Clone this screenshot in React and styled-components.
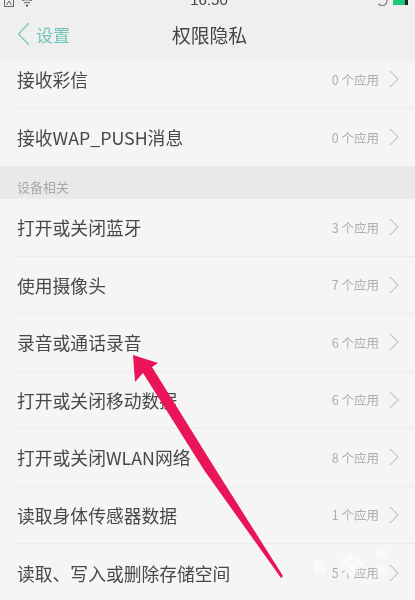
import React from 'react';
import styled, { createGlobalStyle } from 'styled-components';

const rowsTop = [
    { name: '接收彩信', count: 0 },
    { name: '接收WAP_PUSH消息', count: 0 },
];

const rowsDevice = [
    { name: '打开或关闭蓝牙', count: 3 },
    { name: '使用摄像头', count: 7 },
    { name: '录音或通话录音', count: 6 },
    { name: '打开或关闭移动数据', count: 6 },
    { name: '打开或关闭WLAN网络', count: 8 },
    { name: '读取身体传感器数据', count: 1 },
    { name: '读取、写入或删除存储空间', count: 5 },
];

const Chevron = () => (
    <ChevronIcon viewBox="0 0 11 20">
        <path d="M1 1l9 9-9 9" fill="none" stroke="#c4c4c4" strokeWidth="1.2" />
    </ChevronIcon>
);

const Row = ({ name, count, last }) => (
    <RowItem $last={last}>
        <RowName>{name}</RowName>
        <RowCount>{count} 个应用</RowCount>
        <Chevron />
    </RowItem>
);

const App = () => (
    <Page>
        <GlobalStyle />
        <StatusBar>
            <StatusLeft>
                <svg width="10" height="7" viewBox="0 0 10 7">
                    <rect x="0.5" y="-3" width="9" height="9.500" fill="none" stroke="#666" />
                    <path d="M2.500 5l2.500-4 2.500 4" fill="none" stroke="#666" />
                </svg>
                <svg width="12" height="7" viewBox="0 0 12 7">
                    <path d="M1 0.500c3-1 7-1 10 0M3 3c2-1 4-1 6 0" fill="none" stroke="#666" strokeWidth="1.200" />
                    <circle cx="6" cy="5.500" r="1.200" fill="#666" />
                </svg>
            </StatusLeft>
            <StatusTime>16:50</StatusTime>
            <StatusRight>
                <svg width="12" height="7" viewBox="0 0 12 7">
                    <path d="M10 0c0 3.500-2 5.500-5 5.500-1.500 0-2.500-.5-3.500-1.500" fill="none" stroke="#777" strokeWidth="1.100" />
                </svg>
                <Battery>
                    <BatteryCap />
                </Battery>
            </StatusRight>
        </StatusBar>
        <Header>
            <BackLink>
                <svg width="13" height="24" viewBox="0 0 13 24">
                    <path d="M12 1L1.500 12 12 23" fill="none" stroke="#7cc8bf" strokeWidth="1.300" />
                </svg>
                <span>设置</span>
            </BackLink>
            <Title>权限隐私</Title>
        </Header>
        <ScrollArea>
            <RowGroup>
                {rowsTop.map((r, i) => (
                    <Row key={r.name} name={r.name} count={r.count} last={i === rowsTop.length - 1} />
                ))}
            </RowGroup>
            <SectionLabel>设备相关</SectionLabel>
            <RowGroup>
                {rowsDevice.map((r, i) => (
                    <Row key={r.name} name={r.name} count={r.count} last={i === rowsDevice.length - 1} />
                ))}
            </RowGroup>
        </ScrollArea>
        <Arrow viewBox="0 0 415 600">
            <path d="M133 355L158 363 152 367 216 470 283 576 281 578 204 470 143 373 135 382Z" fill="#ea1558" />
        </Arrow>
        <Watermark>
            <WatermarkBrand>
                B
                <svg width="26" height="24" viewBox="0 0 26 24">
                    <ellipse cx="7" cy="6" rx="2.500" ry="3.500" fill="#fff" />
                    <ellipse cx="13" cy="3.500" rx="2.500" ry="3.500" fill="#fff" />
                    <ellipse cx="19" cy="6" rx="2.500" ry="3.500" fill="#fff" />
                    <ellipse cx="3" cy="12" rx="2" ry="3" fill="#fff" />
                    <ellipse cx="23" cy="12" rx="2" ry="3" fill="#fff" />
                    <ellipse cx="13" cy="15" rx="7" ry="6" fill="#fff" />
                </svg>
                <span>经验</span>
            </WatermarkBrand>
        </Watermark>
    </Page>
);

const GlobalStyle = createGlobalStyle`
    html, body {
        margin: 0;
        padding: 0;
        background: #f5f5f5;
    }
`

const Page = styled.div`
    position: relative;
    width: 415px;
    height: 600px;
    overflow: hidden;
    background: #f5f5f5;
    font-family: "Noto Sans CJK SC", "Liberation Sans", sans-serif;
    filter: blur(0.6px);
`

const StatusBar = styled.div`
    display: flex;
    align-items: flex-start;
    justify-content: space-between;
    height: 7px;
    padding-left: 4px;
    background: #efefef;
    overflow: hidden;
`

const StatusLeft = styled.div`
    display: flex;
    align-items: flex-start;
    gap: 7px;
    width: 60px;
`

const StatusTime = styled.div`
    font-family: "Liberation Sans", sans-serif;
    font-size: 15px;
    line-height: 15px;
    height: 15px;
    flex-shrink: 0;
    color: #444;
    margin: -8px 0 0 3px;
`

const StatusRight = styled.div`
    display: flex;
    align-items: flex-start;
    justify-content: flex-end;
    gap: 4px;
    width: 64px;
`

const Battery = styled.div`
    display: flex;
    justify-content: flex-end;
    width: 22px;
    height: 5px;
    background: #1ec97e;
`

const BatteryCap = styled.div`
    width: 10px;
    height: 5px;
    background: #f0f0f0;
    border-left: 3px solid #222;
    box-sizing: border-box;
`

const Header = styled.div`
    position: relative;
    display: flex;
    align-items: center;
    justify-content: center;
    height: 54px;
    padding-left: 4px;
    background: #efefef;
`

const BackLink = styled.div`
    position: absolute;
    left: 17px;
    top: 0;
    bottom: 0;
    display: flex;
    align-items: center;
    gap: 6px;
    color: #74c4ba;
    font-size: 17px;
`

const Title = styled.div`
    font-size: 18.800px;
    color: #444;
`

const ScrollArea = styled.div`
    height: 539px;
    overflow: hidden;
`

const RowGroup = styled.div`
    display: flex;
    flex-direction: column;

    &:first-child {
        margin-top: -10px;
    }
`

const RowItem = styled.div`
    display: flex;
    align-items: center;
    height: 57.500px;
    margin-left: 17px;
    padding-right: 16px;
    box-sizing: border-box;
    border-bottom: ${(p) => (p.$last ? 'none' : '1px solid #ebebeb')};
`

const RowName = styled.div`
    flex: 1;
    font-size: 17.800px;
    color: #484848;
`

const RowCount = styled.div`
    font-size: 12.500px;
    color: #aeaeae;
    margin-right: 10px;
`

const ChevronIcon = styled.svg`
    width: 10px;
    height: 18px;
`

const SectionLabel = styled.div`
    display: flex;
    align-items: center;
    height: 33px;
    padding: 8px 0 0 17px;
    box-sizing: border-box;
    background: #e9e9e9;
    font-size: 13px;
    color: #a8a8a8;
`

const Arrow = styled.svg`
    position: absolute;
    inset: 0;
    width: 415px;
    height: 600px;
    pointer-events: none;
`

const Watermark = styled.div`
    position: absolute;
    left: 314px;
    top: 552px;
    width: 84px;
    opacity: 0.75;
    filter: blur(0.8px);
`

const WatermarkBrand = styled.div`
    display: flex;
    align-items: flex-end;
    gap: 12px;
    height: 26px;
    font-family: "Liberation Sans", sans-serif;
    font-size: 17px;
    font-weight: 700;
    line-height: 20px;
    color: #fff;

    span {
        font-size: 11px;
        line-height: 16px;
    }
`

export default App
